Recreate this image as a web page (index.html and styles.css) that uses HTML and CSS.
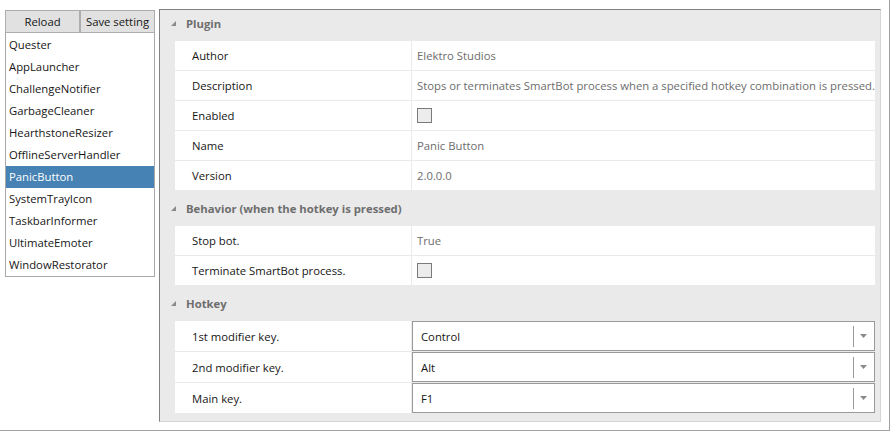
FILE: index.html
```html
<!DOCTYPE html>
<html>
<head>
<meta charset="utf-8">
<link rel="stylesheet" href="styles.css">
</head>
<body>
<div class="window">
  <div class="left">
    <div class="buttons">
      <button class="btn">Reload</button>
      <button class="btn">Save setting</button>
    </div>
    <ul class="list">
      <li class="item">Quester</li>
      <li class="item">AppLauncher</li>
      <li class="item">ChallengeNotifier</li>
      <li class="item">GarbageCleaner</li>
      <li class="item">HearthstoneResizer</li>
      <li class="item">OfflineServerHandler</li>
      <li class="item selected">PanicButton</li>
      <li class="item">SystemTrayIcon</li>
      <li class="item">TaskbarInformer</li>
      <li class="item">UltimateEmoter</li>
      <li class="item">WindowRestorator</li>
    </ul>
  </div>
  <div class="grid">
    <div class="category first">
      <div class="cat-head"><svg class="tri" width="5" height="5" viewBox="0 0 5 5"><polygon points="5,0 5,5 0,5" fill="#8a8a8a"/></svg><span>Plugin</span></div>
      <div class="row"><div class="name">Author</div><div class="value">Elektro Studios</div></div>
      <div class="row"><div class="name">Description</div><div class="value">Stops or terminates SmartBot process when a specified hotkey combination is pressed.</div></div>
      <div class="row"><div class="name">Enabled</div><div class="value"><span class="check"></span></div></div>
      <div class="row"><div class="name">Name</div><div class="value">Panic Button</div></div>
      <div class="row"><div class="name">Version</div><div class="value">2.0.0.0</div></div>
    </div>
    <div class="category">
      <div class="cat-head"><svg class="tri" width="5" height="5" viewBox="0 0 5 5"><polygon points="5,0 5,5 0,5" fill="#8a8a8a"/></svg><span>Behavior (when the hotkey is pressed)</span></div>
      <div class="row"><div class="name">Stop bot.</div><div class="value">True</div></div>
      <div class="row"><div class="name">Terminate SmartBot process.</div><div class="value"><span class="check"></span></div></div>
    </div>
    <div class="category">
      <div class="cat-head"><svg class="tri" width="5" height="5" viewBox="0 0 5 5"><polygon points="5,0 5,5 0,5" fill="#8a8a8a"/></svg><span>Hotkey</span></div>
      <div class="row tall"><div class="name">1st modifier key.</div><div class="value combo-cell"><div class="combo"><span class="combo-text">Control</span><span class="combo-sep"></span><svg class="arrow" width="7" height="4" viewBox="0 0 7 4"><polygon points="0,0 7,0 3.5,4" fill="#8a8a8a"/></svg></div></div></div>
      <div class="row tall"><div class="name">2nd modifier key.</div><div class="value combo-cell"><div class="combo"><span class="combo-text">Alt</span><span class="combo-sep"></span><svg class="arrow" width="7" height="4" viewBox="0 0 7 4"><polygon points="0,0 7,0 3.5,4" fill="#8a8a8a"/></svg></div></div></div>
      <div class="row tall"><div class="name">Main key.</div><div class="value combo-cell"><div class="combo"><span class="combo-text">F1</span><span class="combo-sep"></span><svg class="arrow" width="7" height="4" viewBox="0 0 7 4"><polygon points="0,0 7,0 3.5,4" fill="#8a8a8a"/></svg></div></div></div>
    </div>
  </div>
</div>
</body>
</html>
```

FILE: styles.css
```css
* { box-sizing: border-box; }
html, body { margin: 0; padding: 0; background: #ffffff; }
body {
  font-family: "Open Sans", "Noto Sans", sans-serif;
  font-size: 11.3px;
  color: #161616;
}
.window {
  width: 890px;
  height: 431px;
  border-right: 1px solid #a0a0a0;
  border-bottom: 1px solid #a0a0a0;
  display: flex;
  align-items: flex-start;
}
.left {
  margin-left: 5px;
  margin-top: 10px;
  width: 150px;
  display: flex;
  flex-direction: column;
}
.buttons { display: flex; height: 23px; }
.btn {
  flex: 1;
  margin: 0;
  height: 23px;
  background: #e1e1e1;
  border: 1px solid #adadad;
  font-family: inherit;
  font-size: 11.3px;
  color: #161616;
  padding: 0;
}
.list {
  list-style: none;
  margin: 0;
  padding: 0;
  border: 1px solid #a8a8a8;
  border-top: 0;
  padding-top: 1px;
}
.item {
  height: 22px;
  line-height: 22px;
  padding-left: 3px;
  white-space: nowrap;
}
.item.selected { background: #4682b4; color: #ffffff; }
.grid {
  margin-left: 4px;
  margin-top: 9px;
  width: 722px;
  height: 413px;
  background: #eaeaea;
  border-top: 1px solid #828282;
  border-left: 1px solid #828282;
  border-right: 1px solid #d4d4d4;
  border-bottom: 1px solid #d4d4d4;
  padding-right: 5px;
}
.category { margin-bottom: 5px; }
.cat-head {
  height: 31px;
  line-height: 28px;
  padding-left: 11px;
  display: flex;
  align-items: flex-start;
  color: #6e6e6e;
  font-weight: 700;
}
.tri { margin-top: 11px; margin-right: 10px; flex: none; }
.row {
  display: flex;
  margin-left: 15px;
  height: 29px;
  margin-bottom: 1px;
}
.row.tall { height: 30px; }
.name {
  width: 236px;
  background: #ffffff;
  padding-left: 17px;
  line-height: 30px;
  margin-right: 1px;
  white-space: nowrap;
}
.row.tall .name { line-height: 31px; }
.value {
  flex: 1;
  background: #ffffff;
  padding-left: 5px;
  line-height: 30px;
  color: #6d6d6d;
  white-space: nowrap;
  overflow: hidden;
  display: flex;
  align-items: center;
}
.combo-cell { padding-left: 0; }
.check {
  width: 15px;
  height: 15px;
  border: 1px solid #7a7a7a;
  background: #ececec;
  display: block;
}
.combo {
  width: 100%;
  height: 30px;
  border: 1px solid #9a9a9a;
  display: flex;
  align-items: center;
  color: #161616;
}
.combo-text { flex: 1; padding-left: 8px; padding-top: 1px; }
.combo-sep {
  width: 1px;
  height: 21px;
  background: #9a9a9a;
  margin-right: 6px;
}
.arrow { margin-right: 7px; }
```
